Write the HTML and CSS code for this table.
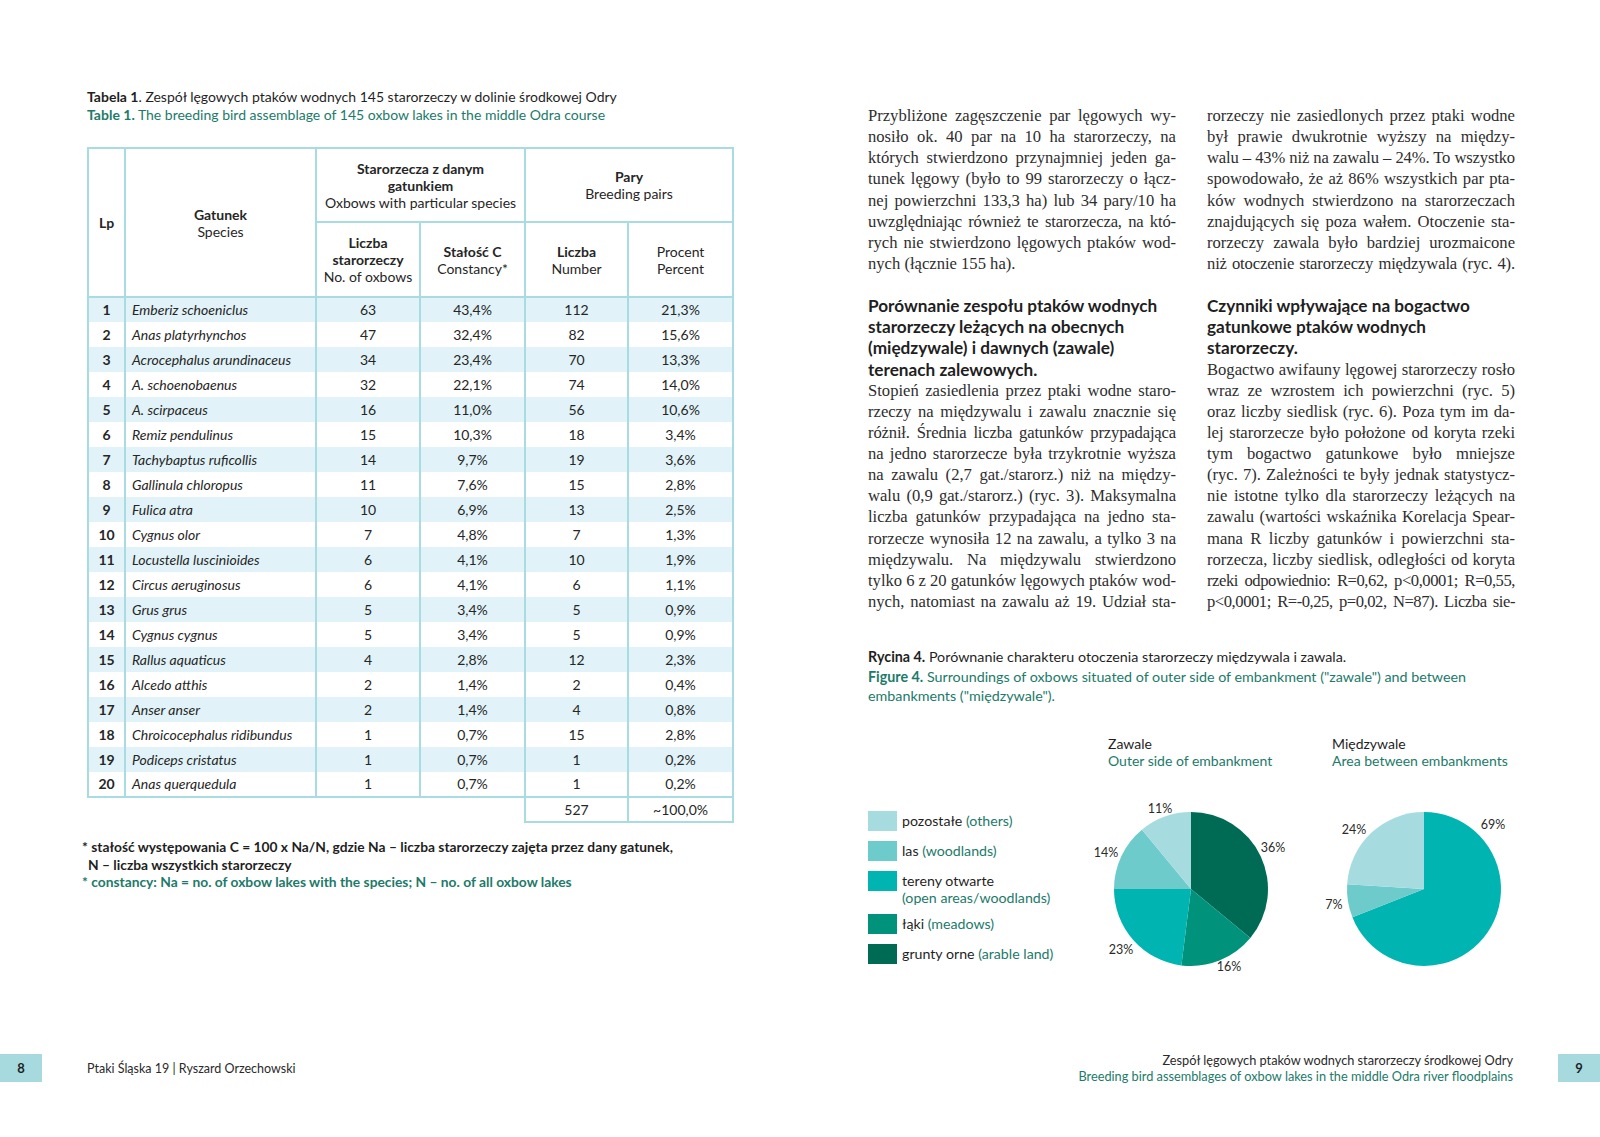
FILE: index.html
```html
<!DOCTYPE html>
<html lang="pl">
<head>
<meta charset="utf-8">
<title>Ptaki Śląska 19</title>
<link rel="stylesheet" href="styles.css">
</head>
<body>
<div class="spread">
  <section class="page page-left">
    <div class="content">
      <div class="title">
        <div><b>Tabela 1</b>. Zespół lęgowych ptaków wodnych 145 starorzeczy w dolinie środkowej Odry</div>
        <div class="green"><b>Table 1.</b> The breeding bird assemblage of 145 oxbow lakes in the middle Odra course</div>
      </div>
      <table class="birds">
        <colgroup>
          <col class="c-lp"><col class="c-sp"><col class="c-n1"><col class="c-n2"><col class="c-n3"><col class="c-n4">
        </colgroup>
        <thead>
          <tr class="h1">
            <th rowspan="2" class="lp"><b>Lp</b></th>
            <th rowspan="2"><b>Gatunek</b><br>Species</th>
            <th colspan="2"><b>Starorzecza z danym<br>gatunkiem</b><br>Oxbows with particular species</th>
            <th colspan="2"><b>Pary</b><br>Breeding pairs</th>
          </tr>
          <tr class="h2">
            <th><b>Liczba<br>starorzeczy</b><br>No. of oxbows</th>
            <th><b>Stałość C</b><br>Constancy*</th>
            <th><b>Liczba</b><br>Number</th>
            <th>Procent<br>Percent</th>
          </tr>
        </thead>
        <tbody>
          <tr><td class="lp">1</td><td class="sp">Emberiz schoeniclus</td><td>63</td><td>43,4%</td><td>112</td><td>21,3%</td></tr>
          <tr><td class="lp">2</td><td class="sp">Anas platyrhynchos</td><td>47</td><td>32,4%</td><td>82</td><td>15,6%</td></tr>
          <tr><td class="lp">3</td><td class="sp">Acrocephalus arundinaceus</td><td>34</td><td>23,4%</td><td>70</td><td>13,3%</td></tr>
          <tr><td class="lp">4</td><td class="sp">A. schoenobaenus</td><td>32</td><td>22,1%</td><td>74</td><td>14,0%</td></tr>
          <tr><td class="lp">5</td><td class="sp">A. scirpaceus</td><td>16</td><td>11,0%</td><td>56</td><td>10,6%</td></tr>
          <tr><td class="lp">6</td><td class="sp">Remiz pendulinus</td><td>15</td><td>10,3%</td><td>18</td><td>3,4%</td></tr>
          <tr><td class="lp">7</td><td class="sp">Tachybaptus ruficollis</td><td>14</td><td>9,7%</td><td>19</td><td>3,6%</td></tr>
          <tr><td class="lp">8</td><td class="sp">Gallinula chloropus</td><td>11</td><td>7,6%</td><td>15</td><td>2,8%</td></tr>
          <tr><td class="lp">9</td><td class="sp">Fulica atra</td><td>10</td><td>6,9%</td><td>13</td><td>2,5%</td></tr>
          <tr><td class="lp">10</td><td class="sp">Cygnus olor</td><td>7</td><td>4,8%</td><td>7</td><td>1,3%</td></tr>
          <tr><td class="lp">11</td><td class="sp">Locustella luscinioides</td><td>6</td><td>4,1%</td><td>10</td><td>1,9%</td></tr>
          <tr><td class="lp">12</td><td class="sp">Circus aeruginosus</td><td>6</td><td>4,1%</td><td>6</td><td>1,1%</td></tr>
          <tr><td class="lp">13</td><td class="sp">Grus grus</td><td>5</td><td>3,4%</td><td>5</td><td>0,9%</td></tr>
          <tr><td class="lp">14</td><td class="sp">Cygnus cygnus</td><td>5</td><td>3,4%</td><td>5</td><td>0,9%</td></tr>
          <tr><td class="lp">15</td><td class="sp">Rallus aquaticus</td><td>4</td><td>2,8%</td><td>12</td><td>2,3%</td></tr>
          <tr><td class="lp">16</td><td class="sp">Alcedo atthis</td><td>2</td><td>1,4%</td><td>2</td><td>0,4%</td></tr>
          <tr><td class="lp">17</td><td class="sp">Anser anser</td><td>2</td><td>1,4%</td><td>4</td><td>0,8%</td></tr>
          <tr><td class="lp">18</td><td class="sp">Chroicocephalus ridibundus</td><td>1</td><td>0,7%</td><td>15</td><td>2,8%</td></tr>
          <tr><td class="lp">19</td><td class="sp">Podiceps cristatus</td><td>1</td><td>0,7%</td><td>1</td><td>0,2%</td></tr>
          <tr class="last"><td class="lp">20</td><td class="sp">Anas querquedula</td><td>1</td><td>0,7%</td><td>1</td><td>0,2%</td></tr>
          <tr class="total"><td class="blank"></td><td class="blank"></td><td class="blank"></td><td class="blank"></td><td class="sum">527</td><td class="sum">~100,0%</td></tr>
        </tbody>
      </table>
      <div class="footnote">
        <div>* stałość występowania C = 100 x Na/N, gdzie Na – liczba starorzeczy zajęta przez dany gatunek,</div>
        <div class="indent">N – liczba wszystkich starorzeczy</div>
        <div class="green">* constancy: Na = no. of oxbow lakes with the species; N – no. of all oxbow lakes</div>
      </div>
    </div>
    <footer class="foot foot-left">
      <span class="pgnum">8</span>
      <span class="foot-text">Ptaki Śląska 19 | Ryszard Orzechowski</span>
    </footer>
  </section>

  <section class="page page-right">
    <div class="content">
      <div class="cols">
        <div class="col">
          <p class="para">
            <span class="l">Przybliżone zagęszczenie par lęgowych wy-</span>
            <span class="l">nosiło ok. 40 par na 10 ha starorzeczy, na</span>
            <span class="l">których stwierdzono przynajmniej jeden ga-</span>
            <span class="l">tunek lęgowy (było to 99 starorzeczy o łącz-</span>
            <span class="l">nej powierzchni 133,3 ha) lub 34 pary/10 ha</span>
            <span class="l t">uwzględniając również te starorzecza, na któ-</span>
            <span class="l">rych nie stwierdzono lęgowych ptaków wod-</span>
            <span class="l end">nych (łącznie 155 ha).</span>
          </p>
          <h3>Porównanie zespołu ptaków wodnych<br>starorzeczy leżących na obecnych<br>(międzywale) i dawnych (zawale)<br>terenach zalewowych.</h3>
          <p class="para">
            <span class="l">Stopień zasiedlenia przez ptaki wodne staro-</span>
            <span class="l">rzeczy na międzywalu i zawalu znacznie się</span>
            <span class="l t">różnił. Średnia liczba gatunków przypadająca</span>
            <span class="l">na jedno starorzecze była trzykrotnie wyższa</span>
            <span class="l">na zawalu (2,7 gat./starorz.) niż na między-</span>
            <span class="l">walu (0,9 gat./starorz.) (ryc. 3). Maksymalna</span>
            <span class="l">liczba gatunków przypadająca na jedno sta-</span>
            <span class="l">rorzecze wynosiła 12 na zawalu, a tylko 3 na</span>
            <span class="l">międzywalu. Na międzywalu stwierdzono</span>
            <span class="l">tylko 6 z 20 gatunków lęgowych ptaków wod-</span>
            <span class="l">nych, natomiast na zawalu aż 19. Udział sta-</span>
          </p>
        </div>
        <div class="col">
          <p class="para">
            <span class="l">rorzeczy nie zasiedlonych przez ptaki wodne</span>
            <span class="l">był prawie dwukrotnie wyższy na między-</span>
            <span class="l t">walu – 43% niż na zawalu – 24%. To wszystko</span>
            <span class="l">spowodowało, że aż 86% wszystkich par pta-</span>
            <span class="l">ków wodnych stwierdzono na starorzeczach</span>
            <span class="l">znajdujących się poza wałem. Otoczenie sta-</span>
            <span class="l">rorzeczy zawala było bardziej urozmaicone</span>
            <span class="l t">niż otoczenie starorzeczy międzywala (ryc. 4).</span>
          </p>
          <h3>Czynniki wpływające na bogactwo<br>gatunkowe ptaków wodnych<br>starorzeczy.</h3>
          <p class="para">
            <span class="l">Bogactwo awifauny lęgowej starorzeczy rosło</span>
            <span class="l">wraz ze wzrostem ich powierzchni (ryc. 5)</span>
            <span class="l">oraz liczby siedlisk (ryc. 6). Poza tym im da-</span>
            <span class="l">lej starorzecze było położone od koryta rzeki</span>
            <span class="l">tym bogactwo gatunkowe było mniejsze</span>
            <span class="l">(ryc. 7). Zależności te były jednak statystycz-</span>
            <span class="l">nie istotne tylko dla starorzeczy leżących na</span>
            <span class="l">zawalu (wartości wskaźnika Korelacja Spear-</span>
            <span class="l">mana R liczby gatunków i powierzchni sta-</span>
            <span class="l">rorzecza, liczby siedlisk, odległości od koryta</span>
            <span class="l tt">rzeki odpowiednio: R=0,62, p&lt;0,0001; R=0,55,</span>
            <span class="l tt">p&lt;0,0001; R=-0,25, p=0,02, N=87). Liczba sie-</span>
          </p>
        </div>
      </div>

      <div class="figcap">
        <div><b>Rycina 4.</b> Porównanie charakteru otoczenia starorzeczy międzywala i zawala.</div>
        <div class="green"><b>Figure 4.</b> Surroundings of oxbows situated of outer side of embankment ("zawale") and between<br>embankments ("międzywale").</div>
      </div>

      <div class="figure">
        <ul class="legend">
          <li><span class="sw sw-oth"></span><span>pozostałe <span class="green">(others)</span></span></li>
          <li><span class="sw sw-wood"></span><span>las <span class="green">(woodlands)</span></span></li>
          <li class="two"><span class="sw sw-open"></span><span>tereny otwarte<br><span class="green">(open areas/woodlands)</span></span></li>
          <li><span class="sw sw-mead"></span><span>łąki <span class="green">(meadows)</span></span></li>
          <li><span class="sw sw-arab"></span><span>grunty orne <span class="green">(arable land)</span></span></li>
        </ul>
        <div class="chart chart-1">
          <div class="chart-title">Zawale<br><span class="green">Outer side of embankment</span></div>
          <svg class="pie" width="224" height="190" viewBox="0 0 224 190">
            <path class="p-arab" d="M101,99 L101,22 A77,77 0 0 1 160.33,148.08 Z"/>
            <path class="p-mead" d="M101,99 L160.33,148.08 A77,77 0 0 1 91.35,175.39 Z"/>
            <path class="p-open" d="M101,99 L91.35,175.39 A77,77 0 0 1 24,99 Z"/>
            <path class="p-wood" d="M101,99 L24,99 A77,77 0 0 1 51.92,39.67 Z"/>
            <path class="p-oth" d="M101,99 L51.92,39.67 A77,77 0 0 1 101,22 Z"/>
            <text x="70" y="22.5">11%</text>
            <text x="183" y="61.5">36%</text>
            <text x="16" y="66.5">14%</text>
            <text x="31" y="163.5">23%</text>
            <text x="139" y="180.5">16%</text>
          </svg>
        </div>
        <div class="chart chart-2">
          <div class="chart-title">Międzywale<br><span class="green">Area between embankments</span></div>
          <svg class="pie" width="206" height="190" viewBox="0 0 206 190">
            <path class="p-open" d="M110,99 L110,22 A77,77 0 1 1 38.41,127.34 Z"/>
            <path class="p-wood" d="M110,99 L38.41,127.34 A77,77 0 0 1 33.15,94.16 Z"/>
            <path class="p-oth" d="M110,99 L33.15,94.16 A77,77 0 0 1 110,22 Z"/>
            <text x="40" y="43.5">24%</text>
            <text x="179" y="38.5">69%</text>
            <text x="20" y="118.5">7%</text>
          </svg>
        </div>
      </div>
    </div>
    <footer class="foot foot-right">
      <div class="foot-text">
        <div>Zespół lęgowych ptaków wodnych starorzeczy środkowej Odry</div>
        <div class="green">Breeding bird assemblages of oxbow lakes in the middle Odra river floodplains</div>
      </div>
      <span class="pgnum">9</span>
    </footer>
  </section>
</div>
</body>
</html>
```

FILE: styles.css
```css
* { box-sizing: border-box; margin: 0; padding: 0; }
html, body { width: 1600px; height: 1137px; background: #ffffff; }
body {
  font-family: Lato, "Open Sans", "Liberation Sans", sans-serif;
  color: #1f1f1f;
  overflow: hidden;
}
.green { color: #217a69; }

.spread { display: flex; width: 1600px; height: 1137px; }
.page { width: 800px; height: 1137px; display: flex; flex-direction: column; }

/* ---------- left page ---------- */
.page-left .content { padding: 88px 0 0 87px; }
.title { font-size: 14px; line-height: 18px; }
.title b { font-weight: 700; }

table.birds {
  margin-top: 23px;
  width: 645px;
  border-collapse: collapse;
  table-layout: fixed;
  font-size: 14px;
  color: #262626;
}
.c-lp { width: 37px; }
.c-sp { width: 191px; }
.c-n1 { width: 104px; }
.c-n2 { width: 105px; }
.c-n3 { width: 103px; }
.c-n4 { width: 105px; }

table.birds th,
table.birds td {
  border-left: 2px solid #a9dce0;
  border-right: 2px solid #a9dce0;
  text-align: center;
  vertical-align: middle;
  padding: 0;
}
table.birds th {
  font-weight: 400;
  line-height: 17px;
  border-top: 2px solid #a9dce0;
  border-bottom: 2px solid #a9dce0;
}
table.birds th b { font-weight: 700; }
table.birds tr.h1 th { height: 74px; }
table.birds tr.h2 th { height: 75px; }
table.birds td { height: 25px; line-height: 18px; }
table.birds tbody tr:nth-child(odd) td { background: #e1f3f8; }
table.birds td.lp { font-weight: 700; }
table.birds td.sp { text-align: left; font-style: italic; padding-left: 6px; white-space: nowrap; }
table.birds tbody tr.last td { border-bottom: 2px solid #a9dce0; }
table.birds tbody tr.total td { background: #ffffff; }
table.birds tbody tr.total td.blank { border-left: none; border-right: none; border-bottom: none; }
table.birds tbody tr.total td.sum { border: 2px solid #a9dce0; }

.footnote {
  margin-top: 15px;
  margin-left: -5px;
  font-size: 13.8px;
  line-height: 17.5px;
  font-weight: 700;
  color: #1f1f1f;
}
.footnote .indent { padding-left: 6px; }
.footnote .green { color: #217a69; }

/* ---------- footers ---------- */
.foot {
  margin-top: auto;
  margin-bottom: 55px;
  display: flex;
  align-items: center;
  height: 28px;
  font-size: 12.5px;
  color: #2a2a2a;
}
.pgnum {
  width: 42px;
  height: 28px;
  background: #a6dadf;
  display: flex;
  align-items: center;
  justify-content: center;
  font-weight: 700;
  font-size: 13px;
  color: #1f1f1f;
}
.foot-left .foot-text { margin-left: 45px; }
.foot-right { justify-content: flex-end; }
.foot-right .foot-text { text-align: right; line-height: 16px; margin-right: 45px; font-size: 12.75px; }

/* ---------- right page ---------- */
.page-right .content { padding: 105px 0 0 68px; }
.cols {
  display: grid;
  grid-template-columns: 308px 308px;
  column-gap: 31px;
}
.para {
  font-family: "Liberation Serif", "Times New Roman", serif;
  font-size: 16.6px;
  line-height: 21.13px;
  color: #2e2e2e;
}
.l {
  display: block;
  text-align: justify;
  text-align-last: justify;
  word-spacing: -2.5px;
  white-space: nowrap;
}
.l.t { letter-spacing: -0.15px; }
.l.tt { letter-spacing: -0.45px; word-spacing: -3px; }
.l.end { text-align-last: left; word-spacing: 0; }
.col h3 {
  margin-top: 21.13px;
  font-size: 17.2px;
  line-height: 21.13px;
  font-weight: 700;
  color: #1f1f1f;
  white-space: nowrap;
}

.figcap {
  margin-top: 35px;
  font-size: 14.3px;
  line-height: 19.5px;
}
.figcap b { font-weight: 700; }

.figure {
  margin-top: 29px;
  display: flex;
  align-items: flex-start;
}
.legend {
  list-style: none;
  width: 222px;
  margin-top: 76px;
  display: flex;
  flex-direction: column;
  gap: 10px;
  font-size: 14.2px;
  line-height: 18px;
}
.legend li { display: flex; align-items: flex-start; gap: 5px; min-height: 20px; }
.legend li > span:last-child { padding-top: 1px; }
.legend li.two { line-height: 17.5px; margin-bottom: -3px; }
.sw { width: 29px; height: 20px; flex: none; }
.sw-oth, .p-oth { background: #a6dcdf; fill: #a6dcdf; }
.sw-wood, .p-wood { background: #6dcbcc; fill: #6dcbcc; }
.sw-open, .p-open { background: #00b4b1; fill: #00b4b1; }
.sw-mead, .p-mead { background: #00927a; fill: #00927a; }
.sw-arab, .p-arab { background: #006b55; fill: #006b55; }

.chart-1 { width: 224px; }
.chart-2 { width: 206px; }
.chart-title {
  padding-left: 18px;
  font-size: 14px;
  line-height: 17px;
  white-space: nowrap;
}
.pie { display: block; margin-top: 21px; overflow: visible; }
.pie text {
  font-family: Lato, "Open Sans", sans-serif;
  font-size: 12.5px;
  fill: #2a2a2a;
  text-anchor: middle;
}
```
